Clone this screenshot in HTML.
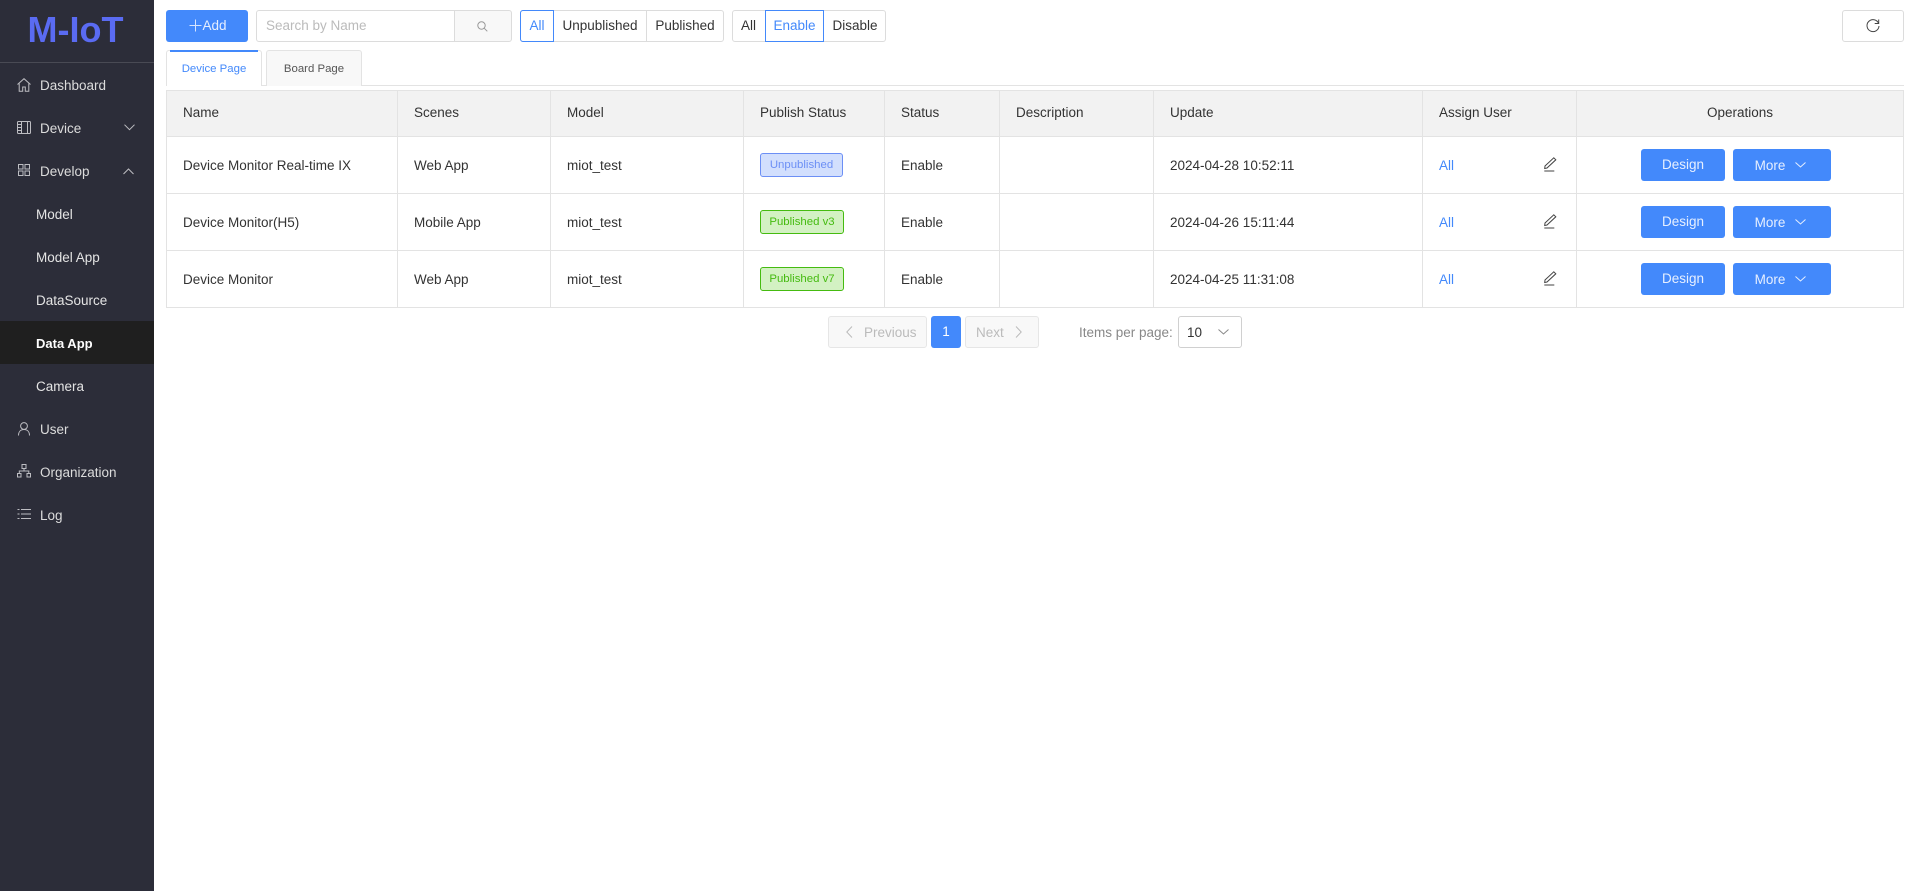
<!DOCTYPE html>
<html><head><meta charset="utf-8"><title>M-IoT</title>
<style>
*{box-sizing:border-box}
html,body{margin:0;padding:0;width:1915px;height:891px;overflow:hidden;background:#fff;font-family:"Liberation Sans",sans-serif;font-size:13.5px;color:#333}
.a{position:absolute;white-space:nowrap}
#side{position:absolute;left:0;top:0;width:154px;height:891px;background:#2c2d39}
.logo{left:0;width:151px;text-align:center;top:9px;font-size:36px;line-height:42px;font-weight:bold;color:#5a6bf2}
.div{left:0;top:62px;width:154px;height:1px;background:#494a54}
.mi{left:40px;color:#dcdcdc;line-height:20px}
.sub{left:36px;color:#e4e4e4;line-height:20px}
.act{left:0;top:321px;width:154px;height:43px;background:#1f1f1f}
svg{position:absolute;overflow:visible;fill:none}
.side-i{stroke:#bdbdc2;stroke-width:1}
.box{border:1px solid #dcdcdc;border-radius:3px;background:#fff}
.btn{background:#4389fb;border-radius:3px;color:#e6efff;text-align:center}
.cell{line-height:20px}
.hl{position:absolute;background:#e3e3e3;height:1px}
.vl{position:absolute;background:#e3e3e3;width:1px;top:90px;height:218px}
.tag{border-radius:3px;font-size:11.4px;line-height:23px;text-align:center;height:24px}
.t1{background:#d2dffd;border:1px solid #6c8ff5;color:#6c8ff5}
.t2{background:#d3f1c3;border:1px solid #45bb10;color:#45bb10}
.blue{color:#4389fb}
</style></head><body>
<div id="side">
<div class="a logo">M-IoT</div>
<div class="a div"></div>
<div class="a act"></div>
<div class="a mi" style="top:76px">Dashboard</div>
<div class="a mi" style="top:119px">Device</div>
<div class="a mi" style="top:162px">Develop</div>
<div class="a sub" style="top:205px">Model</div>
<div class="a sub" style="top:248px">Model App</div>
<div class="a sub" style="top:291px">DataSource</div>
<div class="a sub" style="top:334px;color:#fff;font-weight:bold;font-size:13px">Data App</div>
<div class="a sub" style="top:377px">Camera</div>
<div class="a mi" style="top:420px">User</div>
<div class="a mi" style="top:463px">Organization</div>
<div class="a mi" style="top:506px">Log</div>
<svg class="side-i" style="left:17px;top:78px" width="14" height="14"><path d="M0.500 6.500L7 .7l6.500 5.800M2.200 5.500v7.800h3.500V9h2.600v4.300h3.500V5.500"/></svg>
<svg class="side-i" style="left:17px;top:121px" width="14" height="13"><rect x=".5" y=".5" width="13" height="12" rx="1"/><path d="M4.500 .5v12M10.500 .5v12"/><path d="M1 3.500h3M1 6.500h3M1 9.500h3"/></svg>
<svg class="side-i" style="left:18px;top:164px" width="12" height="12"><rect x=".5" y=".5" width="4.500" height="4.500"/><rect x="7" y=".5" width="4.500" height="4.500"/><rect x=".5" y="7" width="4.500" height="4.500"/><rect x="7" y="7" width="4.500" height="4.500"/></svg>
<svg class="side-i" style="left:124px;top:124px" width="11" height="7"><path d="M.5 .7L5.500 5.700 10.500 .7"/></svg>
<svg class="side-i" style="left:123px;top:168px" width="11" height="7"><path d="M.5 6L5.500 1 10.500 6"/></svg>
<svg class="side-i" style="left:18px;top:422px" width="12" height="14"><circle cx="6" cy="4" r="3.400"/><path d="M.5 13.500c0-3.600 2-6 5.500-6s5.500 2.400 5.500 6"/></svg>
<svg class="side-i" style="left:17px;top:464px" width="14" height="14"><rect x="5" y=".5" width="4" height="4"/><rect x=".5" y="9.500" width="3.500" height="3.500"/><rect x="10" y="9.500" width="3.500" height="3.500"/><path d="M7 4.500V7M2.300 9.500V7h9.500v2.500"/></svg>
<svg class="side-i" style="left:17px;top:508px" width="14" height="12"><path d="M4 1.500h10M4 6h10M4 10.500h10M.5 1.500h2M.5 6h2M.5 10.500h2"/></svg>
</div>

<div class="a btn" style="left:166px;top:10px;width:82px;height:32px;line-height:31px;padding-left:15px">Add</div>
<svg style="left:189px;top:19px" width="13" height="13" stroke="#d5e4ff" stroke-width="1"><path d="M6.500 .5v12M.5 6.500h12"/></svg>

<div class="a box" style="left:256px;top:10px;width:199px;height:32px;border-radius:3px 0 0 3px;line-height:30px;padding-left:9px;color:#bbb">Search by Name</div>
<div class="a box" style="left:454px;top:10px;width:58px;height:32px;border-radius:0 3px 3px 0;background:#f8f8f8"></div>
<svg style="left:477px;top:21px" width="11" height="11" stroke="#999" stroke-width="1"><circle cx="4.500" cy="4.500" r="3.700"/><path d="M7.300 7.300l3 3"/></svg>

<div class="a box" style="left:520px;top:10px;width:204px;height:32px"></div>
<div class="a" style="left:520px;top:10px;width:34px;height:32px;border:1px solid #4389fb;border-radius:3px 0 0 3px;line-height:30px;text-align:center;color:#4389fb">All</div>
<div class="a" style="left:554px;top:10px;width:92px;height:32px;line-height:32px;text-align:center">Unpublished</div>
<div class="a" style="left:646px;top:11px;width:1px;height:30px;background:#dcdcdc"></div>
<div class="a" style="left:647px;top:10px;width:76px;height:32px;line-height:32px;text-align:center">Published</div>

<div class="a box" style="left:732px;top:10px;width:154px;height:32px"></div>
<div class="a" style="left:732px;top:10px;width:33px;height:32px;line-height:32px;text-align:center">All</div>
<div class="a" style="left:765px;top:10px;width:59px;height:32px;border:1px solid #4389fb;line-height:30px;text-align:center;color:#4389fb">Enable</div>
<div class="a" style="left:824px;top:10px;width:62px;height:32px;line-height:32px;text-align:center">Disable</div>

<div class="a box" style="left:1842px;top:10px;width:62px;height:32px"></div>
<svg style="left:1866px;top:18px" width="14" height="15" stroke="#444" stroke-width="1"><path d="M12.500 5.200A6 6 0 1 0 13 8"/><path d="M12.700 1.500v4h-4"/></svg>

<div class="a" style="left:166px;top:50px;width:96px;height:36px;border:1px solid #e3e3e3;border-bottom:0;border-radius:3px 3px 0 0;background:#fff;color:#4389fb;font-size:11.4px;line-height:37px;text-align:center">Device Page</div>
<div class="a" style="left:170px;top:50px;width:88px;height:2px;background:#4389fb"></div>
<div class="a" style="left:266px;top:50px;width:96px;height:36px;border:1px solid #e3e3e3;border-bottom:0;border-radius:3px 3px 0 0;background:#f8f8f8;color:#555;font-size:11.4px;line-height:37px;text-align:center">Board Page</div>
<div class="hl" style="left:362px;top:85px;width:1542px"></div>
<div class="hl" style="left:262px;top:85px;width:4px"></div>

<div class="a" style="left:166px;top:90px;width:1738px;height:46px;background:#f2f2f2"></div>
<div class="hl" style="left:166px;top:90px;width:1738px"></div>
<div class="hl" style="left:166px;top:136px;width:1738px"></div>
<div class="hl" style="left:166px;top:193px;width:1738px"></div>
<div class="hl" style="left:166px;top:250px;width:1738px"></div>
<div class="hl" style="left:166px;top:307px;width:1738px"></div>
<div class="vl" style="left:166px"></div><div class="vl" style="left:397px"></div><div class="vl" style="left:550px"></div><div class="vl" style="left:743px"></div><div class="vl" style="left:884px"></div><div class="vl" style="left:999px"></div><div class="vl" style="left:1153px"></div><div class="vl" style="left:1422px"></div><div class="vl" style="left:1576px"></div><div class="vl" style="left:1903px"></div>

<div class="a cell" style="left:183px;top:103px">Name</div>
<div class="a cell" style="left:414px;top:103px">Scenes</div>
<div class="a cell" style="left:567px;top:103px">Model</div>
<div class="a cell" style="left:760px;top:103px">Publish Status</div>
<div class="a cell" style="left:901px;top:103px">Status</div>
<div class="a cell" style="left:1016px;top:103px">Description</div>
<div class="a cell" style="left:1170px;top:103px">Update</div>
<div class="a cell" style="left:1439px;top:103px">Assign User</div>
<div class="a cell" style="left:1577px;top:103px;width:326px;text-align:center">Operations</div>

<div class="a cell" style="left:183px;top:156px">Device Monitor Real-time IX</div>
<div class="a cell" style="left:414px;top:156px">Web App</div>
<div class="a cell" style="left:567px;top:156px">miot_test</div>
<div class="a tag t1" style="left:760px;top:153px;width:83px">Unpublished</div>
<div class="a cell" style="left:901px;top:156px">Enable</div>
<div class="a cell" style="left:1170px;top:156px">2024-04-28 10:52:11</div>
<div class="a cell blue" style="left:1439px;top:156px">All</div>

<div class="a cell" style="left:183px;top:213px">Device Monitor(H5)</div>
<div class="a cell" style="left:414px;top:213px">Mobile App</div>
<div class="a cell" style="left:567px;top:213px">miot_test</div>
<div class="a tag t2" style="left:760px;top:210px;width:84px">Published v3</div>
<div class="a cell" style="left:901px;top:213px">Enable</div>
<div class="a cell" style="left:1170px;top:213px">2024-04-26 15:11:44</div>
<div class="a cell blue" style="left:1439px;top:213px">All</div>

<div class="a cell" style="left:183px;top:270px">Device Monitor</div>
<div class="a cell" style="left:414px;top:270px">Web App</div>
<div class="a cell" style="left:567px;top:270px">miot_test</div>
<div class="a tag t2" style="left:760px;top:267px;width:84px">Published v7</div>
<div class="a cell" style="left:901px;top:270px">Enable</div>
<div class="a cell" style="left:1170px;top:270px">2024-04-25 11:31:08</div>
<div class="a cell blue" style="left:1439px;top:270px">All</div>

<svg style="left:1544px;top:157px" width="13" height="15" stroke="#444" stroke-width="1"><path d="M1 9L9.800 .8l2 2L3 11l-2.300 .5z"/><path d="M.3 14h10" stroke="#777" stroke-width="1.400"/></svg>
<svg style="left:1544px;top:214px" width="13" height="15" stroke="#444" stroke-width="1"><path d="M1 9L9.800 .8l2 2L3 11l-2.300 .5z"/><path d="M.3 14h10" stroke="#777" stroke-width="1.400"/></svg>
<svg style="left:1544px;top:271px" width="13" height="15" stroke="#444" stroke-width="1"><path d="M1 9L9.800 .8l2 2L3 11l-2.300 .5z"/><path d="M.3 14h10" stroke="#777" stroke-width="1.400"/></svg>

<div class="a btn" style="left:1641px;top:149px;width:84px;height:32px;line-height:31px">Design</div>
<div class="a btn" style="left:1733px;top:149px;width:98px;height:32px;line-height:33px;padding-right:24px">More</div>
<svg style="left:1795px;top:162px" width="11" height="6" stroke="#e6efff" stroke-width="1"><path d="M.5 .5l5 4.500 5-4.500"/></svg>
<div class="a btn" style="left:1641px;top:206px;width:84px;height:32px;line-height:31px">Design</div>
<div class="a btn" style="left:1733px;top:206px;width:98px;height:32px;line-height:33px;padding-right:24px">More</div>
<svg style="left:1795px;top:219px" width="11" height="6" stroke="#e6efff" stroke-width="1"><path d="M.5 .5l5 4.500 5-4.500"/></svg>
<div class="a btn" style="left:1641px;top:263px;width:84px;height:32px;line-height:31px">Design</div>
<div class="a btn" style="left:1733px;top:263px;width:98px;height:32px;line-height:33px;padding-right:24px">More</div>
<svg style="left:1795px;top:276px" width="11" height="6" stroke="#e6efff" stroke-width="1"><path d="M.5 .5l5 4.500 5-4.500"/></svg>

<div class="a box" style="left:828px;top:316px;width:99px;height:32px;background:#f8f8f8;border-color:#e6e6e6;color:#bbb;line-height:31px;padding-left:35px">Previous</div>
<svg style="left:846px;top:326px" width="7" height="12" stroke="#bbb" stroke-width="1"><path d="M6 .5L.8 6 6 11.500"/></svg>
<div class="a btn" style="left:931px;top:316px;width:30px;height:32px;line-height:32px;color:#fff">1</div>
<div class="a box" style="left:965px;top:316px;width:74px;height:32px;background:#f8f8f8;border-color:#e6e6e6;color:#bbb;line-height:31px;padding-left:10px">Next</div>
<svg style="left:1015px;top:326px" width="7" height="12" stroke="#bbb" stroke-width="1"><path d="M1 .5L6.200 6 1 11.500"/></svg>
<div class="a" style="left:1079px;top:323px;line-height:20px;color:#888">Items per page:</div>
<div class="a box" style="left:1178px;top:316px;width:64px;height:32px;border-color:#d0d0d0;line-height:31px;padding-left:8px">10</div>
<svg style="left:1218px;top:329px" width="11" height="6" stroke="#888" stroke-width="1"><path d="M.5 .5l5 4.500 5-4.500"/></svg>
</body></html>
